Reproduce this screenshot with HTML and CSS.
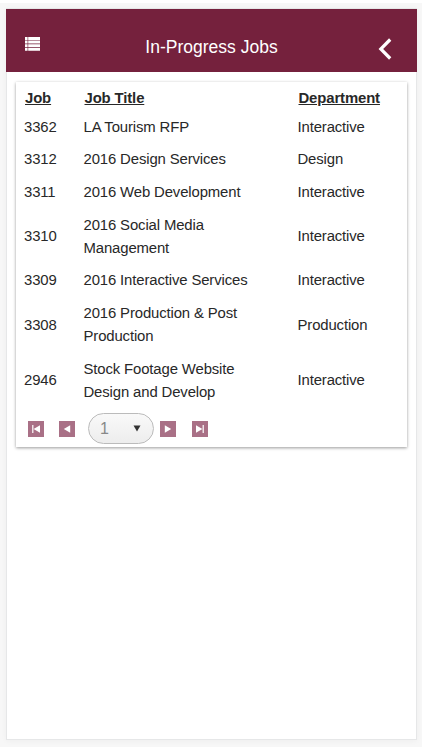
FILE: index.html
```html
<!doctype html>
<html lang="en">
<head>
	<meta charset="utf-8">
	<title>In-Progress Jobs</title>
	<link rel="stylesheet" href="styles.css">
</head>
<body>
	<div class="backdrop">
		<div class="page">
			<header class="header">
				<svg class="menu" width="15" height="14" viewBox="0 0 15 14">
					<path d="M0 0h2.6v2.9H0zM3.2 0H15v2.9H3.2zM0 3.6h2.6v2.9H0zM3.2 3.6H15v2.9H3.2zM0 7.2h2.6v2.9H0zM3.2 7.2H15v2.9H3.2zM0 10.8h2.6v2.9H0zM3.2 10.8H15v2.9H3.2z" fill="#fff"/>
				</svg>
				<h1 class="title">In-Progress Jobs</h1>
				<svg class="back" width="14" height="22" viewBox="0 0 14 22">
					<path d="M12.2 1.5L2.8 11l9.4 9.5" fill="none" stroke="#fff" stroke-width="3.2"/>
				</svg>
			</header>
			<div class="card">
				<table class="jobs">
					<thead>
						<tr><th class="colJob">Job</th><th class="colTitle">Job Title</th><th>Department</th></tr>
					</thead>
					<tbody>
						<tr><td>3362</td><td>LA Tourism RFP</td><td>Interactive</td></tr>
						<tr><td>3312</td><td>2016 Design Services</td><td>Design</td></tr>
						<tr><td>3311</td><td>2016 Web Development</td><td>Interactive</td></tr>
						<tr><td>3310</td><td>2016 Social Media<br>Management</td><td>Interactive</td></tr>
						<tr><td>3309</td><td>2016 Interactive Services</td><td>Interactive</td></tr>
						<tr><td>3308</td><td>2016 Production &amp; Post<br>Production</td><td>Production</td></tr>
						<tr><td>2946</td><td>Stock Footage Website<br>Design and Develop</td><td>Interactive</td></tr>
					</tbody>
				</table>
				<div class="pager">
					<svg class="btn first" viewBox="0 0 16 16"><path d="M4.2 4h1.2v8H4.2zM12 4.2v7.6L5.6 8z" fill="#fff"/></svg>
					<svg class="btn prev" viewBox="0 0 16 16"><path d="M11.2 4.2v7.6L4.8 8z" fill="#fff"/></svg>
					<div class="select">
						<span>1</span>
						<svg width="8" height="7" viewBox="0 0 8 7"><path d="M.5.5h7L4 6.5z" fill="#333"/></svg>
					</div>
					<svg class="btn next" viewBox="0 0 16 16"><path d="M4.8 4.2v7.6L11.2 8z" fill="#fff"/></svg>
					<svg class="btn last" viewBox="0 0 16 16"><path d="M4 4.2v7.6L10.4 8zM10.6 4h1.2v8h-1.2z" fill="#fff"/></svg>
				</div>
			</div>
		</div>
	</div>
</body>
</html>
```
FILE: styles.css
```css
* {
	box-sizing: border-box;
}

body {
	margin: 0;
	padding: 3px 0;
	background-color: #fff;
	font-family: "Liberation Sans", Arial, sans-serif;
	color: #282828;
}

.backdrop {
	height: 744px;
	padding: 5px 5px 7px 6px;
	background-color: #f7f7f7;
}

.page {
	height: 732px;
	border: 1px solid #e6e7e8;
	background-color: #fff;
	box-shadow: 0 1px 6px rgba(0, 0, 0, .04);
}

/*header*/

.header {
	display: flex;
	justify-content: space-between;
	height: 63px;
	margin: 0 -1px;
	padding: 0 25px 0 19px;
	background-color: #75213d;
}

.menu {
	margin-top: 28px;
}

.title {
	margin: 28px 0 0 5px;
	font-size: 17.5px;
	font-weight: normal;
	line-height: 20px;
	color: #fff;
}

.back {
	margin-top: 29px;
}

/*table with jobs*/

.card {
	height: 365px;
	margin: 10px 9px 0;
	padding-top: 4px;
	box-shadow: 0 1px 3px rgba(0, 0, 0, .4);
}

.jobs {
	width: 100%;
	table-layout: fixed;
	border-collapse: collapse;
	font-size: 14.9px;
	line-height: 22.9px;
	letter-spacing: -0.13px;
	text-align: left;
}

.jobs th {
	padding: 1px 0 1px 9px;
	text-decoration: underline;
}

.jobs td {
	padding: 4.9px 0 4.9px 8px;
}

.colJob {
	width: 59.5px;
}

.colTitle {
	width: 214px;
}

/*pager*/

.pager {
	display: flex;
	align-items: center;
	height: 31px;
	margin-top: 5px;
	padding-left: 12px;
}

.btn {
	width: 16px;
	height: 16px;
	background-color: #a97086;
}

.prev {
	margin-left: 15px;
}

.select {
	display: flex;
	align-items: center;
	justify-content: space-between;
	width: 66px;
	height: 31px;
	margin: 0 6px 0 13px;
	padding: 0 12px 0 11px;
	border: 1px solid #bbb;
	border-radius: 16px;
	background: linear-gradient(#f9f9f9, #ededed);
	font-size: 16px;
	color: #888;
}

.last {
	margin-left: 16px;
}
```
